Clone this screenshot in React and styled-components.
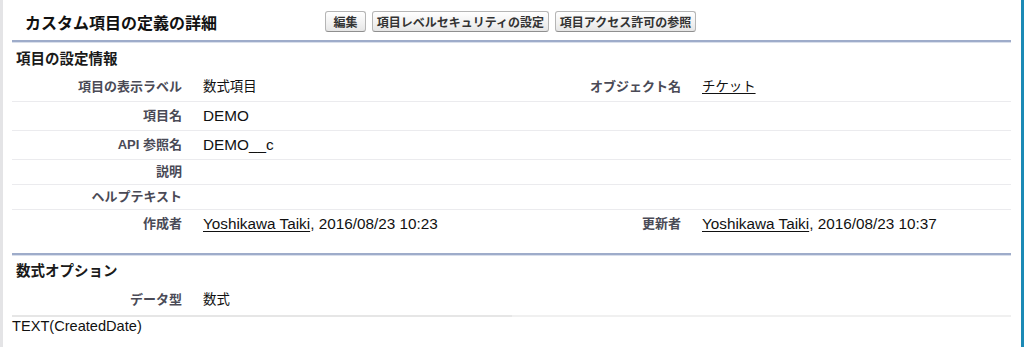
import React from "react";
import styled, { createGlobalStyle } from "styled-components";

const GlobalStyle = createGlobalStyle`
  html, body {
    margin: 0;
    padding: 0;
    background: #fff;
  }
  body {
    font-family: "Liberation Sans", "Noto Sans CJK JP", Arial, sans-serif;
    color: #000;
  }
`;

const Page = styled.div`
  height: 347px;
  overflow: hidden;
  box-sizing: border-box;
  border-left: 3px solid #e4e4e6;
  border-right: 3px solid #1b8ab6;
  padding: 0 10px 0 9px;
  background: #fff;
`;

const Header = styled.div`
  display: flex;
  align-items: center;
  height: 40px;
  border-bottom: 2px solid #9eacca;
  box-shadow: 0 1px 0 #d9dfeb;
`;

const Title = styled.h2`
  width: 313px;
  margin: 0;
  padding: 4px 0 0 13px;
  box-sizing: border-box;
  font-size: 16px;
  font-weight: bold;
  color: #111;
  white-space: nowrap;
`;

const Buttons = styled.div`
  display: flex;
  gap: 6px;
  padding-top: 3px;
`;

const Button = styled.button`
  width: ${(p) => p.$w}px;
  height: 21px;
  padding: 0;
  border: 1px solid #b5b5b5;
  border-bottom-color: #8f8f8f;
  border-radius: 3px;
  background: linear-gradient(#ffffff, #f1f1f1 60%, #e6e6e6);
  font-family: "Liberation Sans", "Noto Sans CJK JP", sans-serif;
  font-size: 12px;
  font-weight: bold;
  color: #333;
  white-space: nowrap;
  cursor: pointer;
`;

const Section = styled.section`
  margin-top: ${(p) => (p.$first ? 0 : 15)}px;
  ${(p) =>
    p.$first
      ? ""
      : `border-top: 2px solid #9eacca; box-shadow: inset 0 1px 0 #d9dfeb;`}
`;

const SectionTitle = styled.h3`
  height: ${(p) => p.$h}px;
  margin: 0;
  padding-left: 4px;
  display: flex;
  align-items: center;
  font-size: 14.5px;
  font-weight: bold;
  color: #1a1a1a;
`;

const Row = styled.div`
  display: grid;
  grid-template-columns: 180px 319px 180px 1fr;
  align-items: center;
  border-bottom: ${(p) => (p.$last ? "none" : "1px solid #ebebee")};
`;

const Label = styled.div`
  padding: 5px 10px 5px 2px;
  text-align: right;
  font-size: 13px;
  line-height: 14px;
  font-weight: bold;
  color: #4a4a56;
  white-space: nowrap;
`;

const Value = styled.div`
  padding: 5px 2px 5px 11px;
  font-size: ${(p) => (p.$jp ? "13.4px" : "15.3px")};
  line-height: 18px;
  color: #111;
  white-space: nowrap;
`;

const Link = styled.a`
  color: #111;
  text-decoration: underline;
  text-underline-offset: 2px;
  text-decoration-thickness: 1px;
  cursor: pointer;
`;

const TypeRow = styled.div`
  display: grid;
  grid-template-columns: 180px 320px 1fr;
  height: 33px;
`;

const TypeCell = styled.div`
  display: flex;
  align-items: center;
  justify-content: ${(p) => (p.$right ? "flex-end" : "flex-start")};
  border-bottom: 2px solid ${(p) => (p.$light ? "#f0f0f0" : "#e6e6e6")};
`;

const Formula = styled.pre`
  margin: 0;
  font-family: "Liberation Sans", "Noto Sans CJK JP", sans-serif;
  font-size: 14.6px;
  line-height: 19px;
  color: #111;
`;

const rows = [
  { label: "項目の表示ラベル", value: "数式項目", jp: true, label2: "オブジェクト名", link2: "チケット" },
  { label: "項目名", value: "DEMO" },
  { label: "API 参照名", value: "DEMO__c" },
  { label: "説明" },
  { label: "ヘルプテキスト" },
  {
    label: "作成者",
    user: "Yoshikawa Taiki",
    date: ", 2016/08/23 10:23",
    label2: "更新者",
    user2: "Yoshikawa Taiki",
    date2: ", 2016/08/23 10:37",
  },
];

const App = () => {
  return (
    <>
      <GlobalStyle />
      <Page>
        <Header>
          <Title>カスタム項目の定義の詳細</Title>
          <Buttons>
            <Button $w={41}>編集</Button>
            <Button $w={177}>項目レベルセキュリティの設定</Button>
            <Button $w={141}>項目アクセス許可の参照</Button>
          </Buttons>
        </Header>

        <Section $first>
          <SectionTitle $h={31}>項目の設定情報</SectionTitle>
          {rows.map((r, i) => (
            <Row key={r.label} $last={i === rows.length - 1}>
              <Label>{r.label}</Label>
              <Value $jp={r.jp}>
                {r.value}
                {r.user && (
                  <>
                    <Link>{r.user}</Link>
                    {r.date}
                  </>
                )}
              </Value>
              <Label>{r.label2}</Label>
              <Value $jp={!!r.link2}>
                {r.link2 && <Link>{r.link2}</Link>}
                {r.user2 && (
                  <>
                    <Link>{r.user2}</Link>
                    {r.date2}
                  </>
                )}
              </Value>
            </Row>
          ))}
        </Section>

        <Section>
          <SectionTitle $h={29}>数式オプション</SectionTitle>
          <TypeRow>
            <TypeCell $right>
              <Label>データ型</Label>
            </TypeCell>
            <TypeCell>
              <Value $jp>数式</Value>
            </TypeCell>
            <TypeCell $light />
          </TypeRow>
          <Formula>TEXT(CreatedDate)</Formula>
        </Section>
      </Page>
    </>
  );
};

export default App;
